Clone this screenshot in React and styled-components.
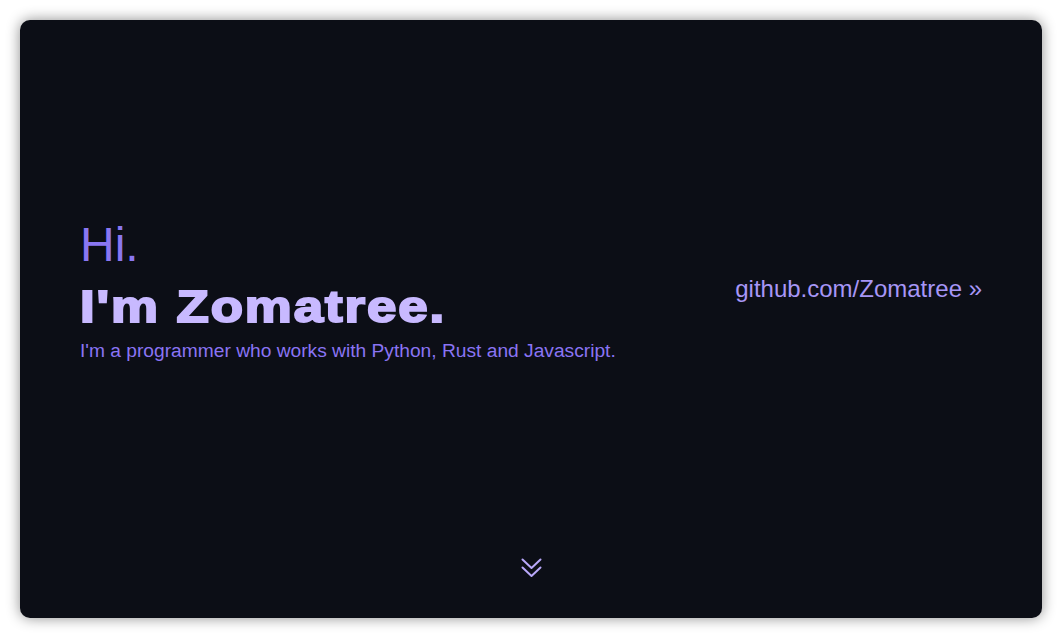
import React from "react";
import styled, { createGlobalStyle } from "styled-components";

const GlobalStyle = createGlobalStyle`
  html, body {
    margin: 0;
    padding: 0;
    background: #ffffff;
  }
  body {
    font-family: "Liberation Sans", Arial, sans-serif;
  }
`;

const Page = styled.div`
  padding: 20px;
  height: 638px;
  box-sizing: border-box;
`;

// the dark card holding everything
const Card = styled.main`
  height: 100%;
  background: #0c0e16;
  border-radius: 10px;
  box-shadow: 0 0 14px rgba(0, 0, 0, 0.45);
  display: flex;
  flex-direction: column;
`;

const Hero = styled.section`
  flex: 1;
  display: flex;
  align-items: center;
  justify-content: space-between;
  padding: 0 60px;
`;

const Intro = styled.div`
  display: flex;
  flex-direction: column;
`;

const Greeting = styled.div`
  font-size: 48px;
  line-height: 55px;
  margin-bottom: 8px;
  color: #8a77f2;
`;

// heavy heading: bold + stroke, widened to get a black-weight look
const Name = styled.h1`
  margin: 0;
  font-weight: 700;
  font-size: 44px;
  line-height: 54px;
  letter-spacing: 1.6px;
  color: #c8b9ff;
  -webkit-text-stroke: 2px #c8b9ff;
  transform: scaleX(1.2);
  transform-origin: left center;
`;

const Tagline = styled.p`
  margin: 6px 0 0;
  font-size: 19.2px;
  line-height: 22px;
  color: #8a74f4;
`;

const GithubLink = styled.a`
  font-size: 24px;
  color: #a796f6;
  text-decoration: none;
`;

const Footer = styled.div`
  height: 60px;
  display: flex;
  justify-content: center;
  align-items: flex-start;
`;

const ScrollIcon = () => (
  <svg width="21" height="20" viewBox="0 0 21 20" fill="none" stroke="#b9a8fa" strokeWidth="2" strokeLinecap="round" strokeLinejoin="round">
    <path d="M1.5 1.5 L10.5 10 L19.5 1.5" />
    <path d="M1.5 9.5 L10.5 18 L19.5 9.5" />
  </svg>
);

export default function App() {
  return (
    <>
      <GlobalStyle />
      <Page>
        <Card>
          <Hero>
            <Intro>
              <Greeting>Hi.</Greeting>
              <Name>I'm Zomatree.</Name>
              <Tagline>I'm a programmer who works with Python, Rust and Javascript.</Tagline>
            </Intro>
            <GithubLink href="#">github.com/Zomatree »</GithubLink>
          </Hero>
          <Footer>
            <ScrollIcon />
          </Footer>
        </Card>
      </Page>
    </>
  );
}
